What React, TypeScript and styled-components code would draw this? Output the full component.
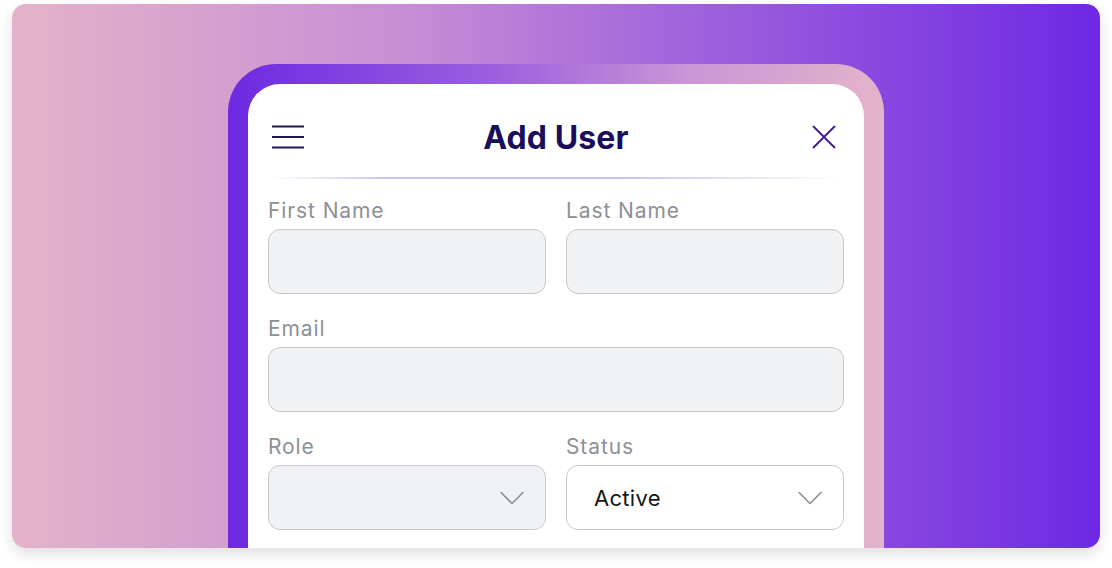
import React from 'react';
import styled, { createGlobalStyle } from 'styled-components';

const GlobalStyle = createGlobalStyle`
  html, body {
    margin: 0;
    padding: 0;
    background: #ffffff;
    font-family: Inter, "Noto Sans", sans-serif;
  }
`;

const Page = styled.div`
  padding: 4px 12px 0;
  height: 568px;
  box-sizing: border-box;
`;

const Stage = styled.div`
  height: 544px;
  border-radius: 14px;
  overflow: hidden;
  display: flex;
  justify-content: center;
  align-items: flex-start;
  padding-top: 60px;
  box-sizing: border-box;
  background: linear-gradient(90deg, #e3b3c9 0%, #c98fd4 35%, #9c5fdd 65%, #6d28e3 100%);
  box-shadow: 0 6px 14px rgba(40, 20, 60, 0.14);
`;

const Frame = styled.div`
  width: 656px;
  height: 560px;
  flex-shrink: 0;
  box-sizing: border-box;
  padding: 20px 20px 0;
  border-radius: 48px 48px 0 0;
  background: linear-gradient(90deg, #6c29e2 0%, #9b5fde 40%, #c995d6 70%, #e3b4ca 100%);
`;

const Card = styled.div`
  height: 100%;
  background: #ffffff;
  border-radius: 32px 32px 0 0;
  padding: 32px 20px 0;
  box-sizing: border-box;
`;

const Header = styled.div`
  display: flex;
  align-items: center;
  justify-content: space-between;
  height: 42px;
  padding: 0 4px;
`;

const Title = styled.h1`
  margin: 0;
  font-size: 32px;
  font-weight: 700;
  color: #1a0d5c;
  letter-spacing: 0.1px;
`;

const IconButton = styled.button`
  width: 32px;
  height: 32px;
  padding: 0;
  border: none;
  background: none;
  display: flex;
  align-items: center;
  justify-content: center;
`;

const Divider = styled.div`
  height: 2px;
  margin: 19px 2px 20px;
  background: linear-gradient(90deg, rgba(200, 192, 236, 0) 0%, #cbc4ee 20%, #c7bfec 60%, rgba(200, 192, 236, 0) 100%);
`;

const Form = styled.div`
  display: flex;
  flex-direction: column;
  gap: 23px;
`;

const Row = styled.div`
  display: grid;
  grid-template-columns: 1fr 1fr;
  gap: 20px;
`;

const Field = styled.div`
  display: flex;
  flex-direction: column;
  gap: 6px;
`;

const Label = styled.label`
  font-size: 21px;
  line-height: 24px;
  letter-spacing: 0.9px;
  color: #8c9097;
`;

const Input = styled.div<{ $filled?: boolean }>`
  height: 65px;
  box-sizing: border-box;
  border: 1.5px solid #c6c8cd;
  border-radius: 12px;
  background: ${(p) => (p.$filled ? '#ffffff' : '#f1f2f4')};
  display: flex;
  align-items: center;
  justify-content: space-between;
  padding: 0 21px 0 27px;
  font-size: 22px;
  letter-spacing: 0.3px;
  color: #16161a;
`;

const Chevron = () => (
  <svg width="24" height="14" viewBox="0 0 24 14" fill="none">
    <path d="M1 1.5 L12 12.5 L23 1.5" stroke="#8c8f95" strokeWidth="1.6" strokeLinecap="round" strokeLinejoin="round" />
  </svg>
);

const Menu = () => (
  <svg width="32" height="24" viewBox="0 0 32 24" fill="none">
    <path d="M0 1.5 H32 M0 12 H32 M0 22.5 H32" stroke="#1e1650" strokeWidth="2" />
  </svg>
);

const Close = () => (
  <svg width="24" height="24" viewBox="0 0 24 24" fill="none">
    <path d="M1 1 L23 23 M23 1 L1 23" stroke="#4a1e96" strokeWidth="2" />
  </svg>
);

const App: React.FC = () => {
  return (
    <>
      <GlobalStyle />
      <Page>
        <Stage>
          <Frame>
            <Card>
              <Header>
                <IconButton>
                  <Menu />
                </IconButton>
                <Title>Add User</Title>
                <IconButton>
                  <Close />
                </IconButton>
              </Header>
              <Divider />
              <Form>
                <Row>
                  <Field>
                    <Label>First Name</Label>
                    <Input />
                  </Field>
                  <Field>
                    <Label>Last Name</Label>
                    <Input />
                  </Field>
                </Row>
                <Field>
                  <Label>Email</Label>
                  <Input />
                </Field>
                <Row>
                  <Field>
                    <Label>Role</Label>
                    <Input>
                      <span />
                      <Chevron />
                    </Input>
                  </Field>
                  <Field>
                    <Label>Status</Label>
                    <Input $filled>
                      <span>Active</span>
                      <Chevron />
                    </Input>
                  </Field>
                </Row>
              </Form>
            </Card>
          </Frame>
        </Stage>
      </Page>
    </>
  );
};

export default App;
